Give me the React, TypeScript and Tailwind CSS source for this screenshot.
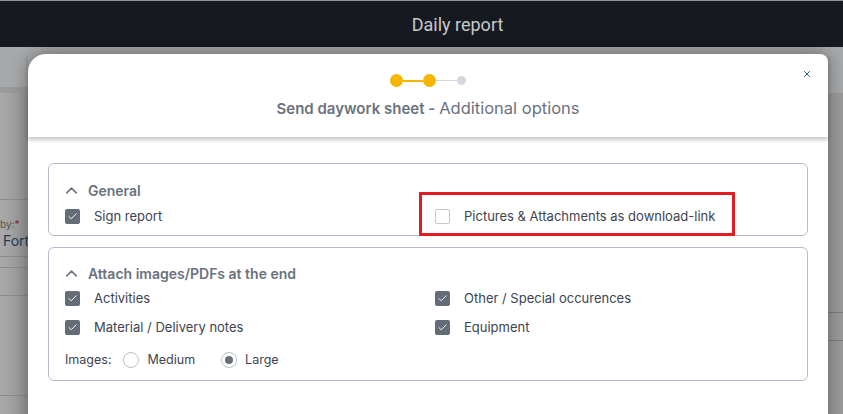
import { Check, ChevronUp, X } from 'lucide-react';

function Checkbox({ checked }: { checked: boolean }) {
  return checked ? (
    <span className="flex h-[15px] w-[15px] shrink-0 items-center justify-center rounded-[2px] bg-[#646c78]">
      <Check className="h-[11px] w-[11px] text-white" strokeWidth={2} />
    </span>
  ) : (
    <span className="h-[15px] w-[15px] shrink-0 rounded-[2px] border border-[#c3c7ce] bg-white" />
  );
}

function Option({ label, checked }: { label: string; checked: boolean }) {
  return (
    <label className="flex items-center gap-[14px] text-[13px] text-[#3d4450]">
      <Checkbox checked={checked} />
      <span>{label}</span>
    </label>
  );
}

function Radio({ label, selected }: { label: string; selected: boolean }) {
  return (
    <label className="flex items-center gap-[8px]">
      <span className="flex h-[16px] w-[16px] items-center justify-center rounded-full border border-[#b9bfc8] bg-white">
        {selected && <span className="h-[8px] w-[8px] rounded-full bg-[#68707c]" />}
      </span>
      <span>{label}</span>
    </label>
  );
}

function SectionHeader({ title }: { title: string }) {
  return (
    <div className="flex h-[20px] items-center gap-[7px] text-[14px] font-semibold text-[#6b727e]">
      <ChevronUp className="-ml-[3px] h-[19px] w-[19px]" strokeWidth={2} />
      <span>{title}</span>
    </div>
  );
}

export default function App() {
  return (
    <div
      className="relative h-[414px] w-[843px] overflow-hidden bg-[#a3a4a6]"
      style={{ fontFamily: 'Inter, "Noto Sans", sans-serif' }}
    >
      {/* top bar */}
      <div className="flex h-[47px] items-center justify-center border-t border-[#8d9096] bg-[#161a20] pl-[72px]">
        <span className="text-[18px] text-[#c7c9cc]" style={{ fontFamily: 'Roboto, sans-serif' }}>
          Daily report
        </span>
      </div>

      {/* dimmed page underneath */}
      <div className="flex h-[367px]">
        <div className="flex w-[40px] flex-col bg-linear-to-r from-[#aaaaaa] to-[#8e8e8e]">
          <div className="h-[46px] border-b-[6px] border-[#999a9c] bg-[#a7a8aa]" />
          <div className="h-[107px] border-b border-[#8b8b8b]" />
          <div className="flex h-[57px] flex-col justify-end border-b border-[#8b8b8b] pb-[5px]">
            <span className="text-[10px] leading-[14px] text-[#555]">
              by:<span className="text-[#7a1f4a]">*</span>
            </span>
            <span className="pl-[3px] text-[14px] leading-[20px] text-[#1e3a56]">Forte</span>
          </div>
          <div className="h-[11px] border-b border-[#8b8b8b]" />
          <div className="h-[28px] border-b border-[#8b8b8b]" />
          <div className="h-[100px] border-b border-[#8b8b8b]" />
        </div>
        <div className="flex-1" />
        <div className="flex w-[20px] flex-col bg-[#9a9a9a]">
          <div className="h-[46px] bg-[#a7a8aa]" />
          <div className="h-[220px] border-b border-[#7e7e7e]" />
          <div className="h-[28px] border-b border-[#7e7e7e]" />
        </div>
      </div>

      {/* modal */}
      <div className="absolute left-[28px] top-[54px] flex h-[380px] w-[800px] flex-col rounded-tl-[18px] rounded-tr-[8px] bg-white shadow-[0_0_18px_rgba(0,0,0,0.35)]">
        <div className="relative flex h-[83px] flex-col items-center shadow-[0_3px_4px_rgba(0,0,0,0.22)]">
          <div className="mt-[20px] flex items-center">
            <span className="h-[13px] w-[13px] rounded-full bg-[#f5b500]" />
            <span className="h-[2px] w-[20px] bg-[#f5b500]" />
            <span className="h-[13px] w-[13px] rounded-full bg-[#f5b500]" />
            <span className="h-[1px] w-[21px] bg-[#d3d7de]" />
            <span className="h-[9px] w-[9px] rounded-full bg-[#d3d7de]" />
          </div>
          <div className="mt-[9px] flex items-baseline gap-[4px] text-[#6b727e]">
            <span className="text-[15px] font-semibold">Send daywork sheet -</span>
            <span className="text-[16.5px]">Additional options</span>
          </div>
          <button className="absolute right-[16px] top-[15px] text-[#1f4f7a]">
            <X className="h-[10px] w-[10px]" strokeWidth={2.2} />
          </button>
        </div>

        <div className="flex flex-col gap-[11px] px-[20px] pt-[26px]">
          <div className="relative rounded-[6px] border border-[#b3bcc8] px-[16px] pb-[8px] pt-[16px]">
            <SectionHeader title="General" />
            <div className="mt-[7px] grid grid-cols-[370px_1fr]">
              <Option label="Sign report" checked />
              <Option label="Pictures & Attachments as download-link" checked={false} />
            </div>
            <div className="absolute left-[370px] top-[28px] h-[44px] w-[316px] border-[3px] border-[#e31b23]" />
          </div>

          <div className="rounded-[6px] border border-[#b3bcc8] px-[16px] pb-[11px] pt-[16px]">
            <SectionHeader title="Attach images/PDFs at the end" />
            <div className="mt-[5px] grid grid-cols-[370px_1fr] gap-y-[10px]">
              <Option label="Activities" checked />
              <Option label="Other / Special occurences" checked />
              <Option label="Material / Delivery notes" checked />
              <Option label="Equipment" checked />
            </div>
            <div className="mt-[13px] flex items-center gap-[12px] text-[12.5px] text-[#3d4450]">
              <span>Images:</span>
              <Radio label="Medium" selected={false} />
              <span className="ml-[14px]">
                <Radio label="Large" selected />
              </span>
            </div>
          </div>
        </div>
      </div>
    </div>
  );
}
